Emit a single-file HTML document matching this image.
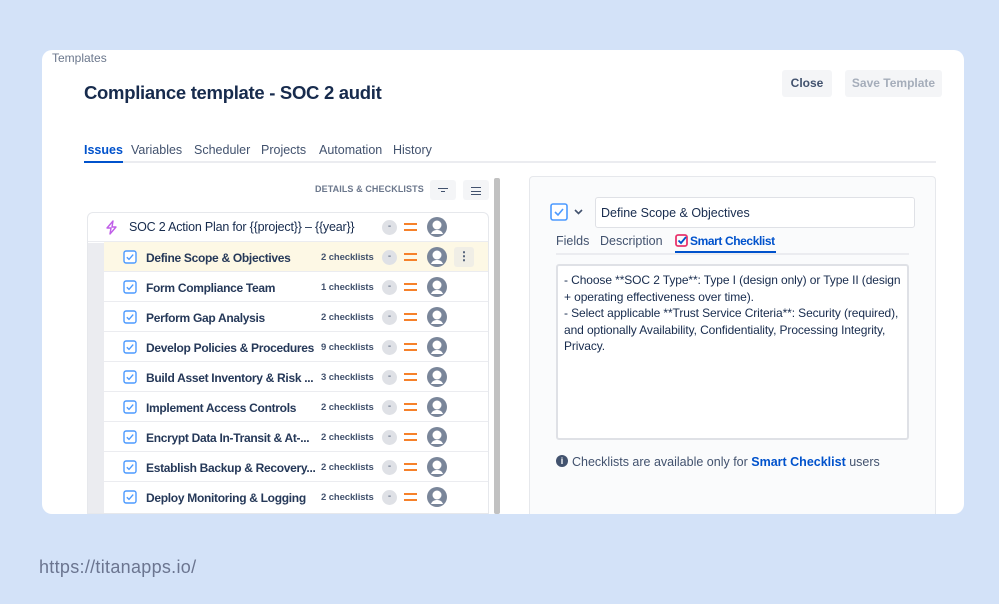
<!DOCTYPE html><html><head><style>
*{box-sizing:border-box;margin:0;padding:0}
body{width:999px;height:604px;background:#d3e2f8;font-family:"Liberation Sans",sans-serif;position:relative;overflow:hidden;color:#172b4d}
.a{position:absolute}
.card{left:42px;top:50px;width:922px;height:464px;background:#fff;border-radius:10px;overflow:hidden}
.row{position:absolute;left:104px;width:384px;height:30px;border-bottom:1px solid #ebecf0;font-size:12px;}
.row .t{position:absolute;left:42px;top:9px;font-weight:bold;color:#253858;letter-spacing:-0.3px;white-space:nowrap}
.row .cb{position:absolute;left:19px;top:8px}
.cnt{position:absolute;left:217px;top:10px;font-size:9.5px;font-weight:bold;color:#42526e;letter-spacing:-0.1px}
.dash{position:absolute;left:278px;top:8px;width:15px;height:15px;border-radius:50%;background:#dfe1e6;font-size:10px;text-align:center;line-height:14px;color:#42526e}
.eq{position:absolute;left:300px;top:11px;width:13px;height:8px;border-top:2px solid #f6812a;border-bottom:2px solid #f6812a}
.av{position:absolute;left:323px;top:5px}
</style></head><body>
<svg width="0" height="0" style="position:absolute"><defs>
<symbol id="cb" viewBox="0 0 14 14"><rect x="1" y="1" width="12" height="12" rx="2" fill="#fff" stroke="#4c9aff" stroke-width="1.4"/><path d="M3.8 7.2l2.2 2.2 4.2-4.8" fill="none" stroke="#4c9aff" stroke-width="1.4"/></symbol>
<symbol id="av" viewBox="0 0 20 20"><circle cx="10" cy="10" r="10" fill="#7a869a"/><circle cx="10" cy="8" r="4.5" fill="#fff"/><path d="M4 17c1-3 3.5-4 6-4s5 1 6 4z" fill="#fff"/></symbol>
</defs></svg>
<div class="a card">
<div class="a" style="left:10px;top:1px;font-size:12px;color:#6b778c">Templates</div>
<div class="a" style="left:42px;top:32px;font-size:18.5px;font-weight:bold;color:#172b4d;letter-spacing:-0.3px">Compliance template - SOC 2 audit</div>
<div class="a" style="left:740px;top:20px;width:50px;height:27px;background:#f4f5f7;border-radius:3px;font-size:12px;font-weight:bold;color:#42526e;text-align:center;line-height:27px">Close</div>
<div class="a" style="left:803px;top:20px;width:97px;height:27px;background:#f4f5f7;border-radius:3px;font-size:12px;font-weight:bold;color:#a5adba;text-align:center;line-height:27px">Save Template</div>
<div class="a" style="left:42px;top:92px;width:852px;font-size:12.5px;color:#42526e;border-bottom:2px solid #ebecf0;height:21px">
<span class="a" style="left:0;top:1px;color:#0052cc;font-weight:bold;border-bottom:2px solid #0052cc;padding-bottom:4px">Issues</span>
<span class="a" style="left:47px;top:1px">Variables</span>
<span class="a" style="left:110px;top:1px">Scheduler</span>
<span class="a" style="left:177px;top:1px">Projects</span>
<span class="a" style="left:235px;top:1px">Automation</span>
<span class="a" style="left:309px;top:1px">History</span>
</div>
</div>
<div class="a" style="left:315px;top:184px;font-size:9px;font-weight:bold;color:#6b778c;letter-spacing:0.1px">DETAILS &amp; CHECKLISTS</div>
<div class="a" style="left:430px;top:180px;width:26px;height:20px;background:#f4f5f7;border-radius:3px"><div class="a" style="left:8px;top:8px;width:10px;border-top:1.5px solid #42526e"></div><div class="a" style="left:11px;top:11px;width:4px;height:3px;border-top:1.5px solid #42526e"></div></div>
<div class="a" style="left:463px;top:180px;width:26px;height:20px;background:#f4f5f7;border-radius:3px"><div class="a" style="left:8px;top:7px;width:10px;height:8px;border-top:1.5px solid #42526e;border-bottom:1.5px solid #42526e"></div><div class="a" style="left:8px;top:11px;width:10px;border-top:1.5px solid #42526e"></div></div>
<div class="a" style="left:494px;top:178px;width:6px;height:336px;background:#c1c1c1;border-radius:2px"></div>
<div class="a" style="left:87px;top:212px;width:402px;height:302px;border:1px solid #e6e8ec;border-radius:6px 6px 0 0;overflow:hidden">
<div class="a" style="left:0;top:30px;width:16px;height:272px;background:#ebecf0"></div>
</div>
<div class="row" style="left:88px;top:212px;width:400px"><svg class="a" style="left:17px;top:8px" width="13" height="15" viewBox="0 0 13 15"><path d="M8 1L2 8h4l-1 6 6-7H7z" fill="none" stroke="#c05ee8" stroke-width="1.4" stroke-linejoin="round"/></svg><span class="t" style="font-weight:normal;color:#172b4d;left:41px;font-size:12.5px;letter-spacing:-0.2px;top:8px">SOC 2 Action Plan for {{project}} – {{year}}</span><div class="dash" style="left:294px">-</div><div class="eq" style="left:316px"></div><svg class="av" style="left:339px" width="20" height="20"><use href="#av"/></svg></div>
<div class="row" style="top:242px;background:#fdf8e5"><svg class="cb" width="14" height="14"><use href="#cb"/></svg><span class="t">Define Scope &amp; Objectives</span><span class="cnt">2 checklists</span><div class="dash">-</div><div class="eq"></div><svg class="av" width="20" height="20"><use href="#av"/></svg><div class="a" style="left:350px;top:5px;width:20px;height:20px;background:#f0eee6;border-radius:3px;text-align:center;font-weight:bold;line-height:19px;color:#42526e">⋮</div></div>
<div class="row" style="top:272px"><svg class="cb" width="14" height="14"><use href="#cb"/></svg><span class="t">Form Compliance Team</span><span class="cnt">1 checklists</span><div class="dash">-</div><div class="eq"></div><svg class="av" width="20" height="20"><use href="#av"/></svg></div>
<div class="row" style="top:302px"><svg class="cb" width="14" height="14"><use href="#cb"/></svg><span class="t">Perform Gap Analysis</span><span class="cnt">2 checklists</span><div class="dash">-</div><div class="eq"></div><svg class="av" width="20" height="20"><use href="#av"/></svg></div>
<div class="row" style="top:332px"><svg class="cb" width="14" height="14"><use href="#cb"/></svg><span class="t">Develop Policies &amp; Procedures</span><span class="cnt">9 checklists</span><div class="dash">-</div><div class="eq"></div><svg class="av" width="20" height="20"><use href="#av"/></svg></div>
<div class="row" style="top:362px"><svg class="cb" width="14" height="14"><use href="#cb"/></svg><span class="t">Build Asset Inventory &amp; Risk ...</span><span class="cnt">3 checklists</span><div class="dash">-</div><div class="eq"></div><svg class="av" width="20" height="20"><use href="#av"/></svg></div>
<div class="row" style="top:392px"><svg class="cb" width="14" height="14"><use href="#cb"/></svg><span class="t">Implement Access Controls</span><span class="cnt">2 checklists</span><div class="dash">-</div><div class="eq"></div><svg class="av" width="20" height="20"><use href="#av"/></svg></div>
<div class="row" style="top:422px"><svg class="cb" width="14" height="14"><use href="#cb"/></svg><span class="t">Encrypt Data In-Transit &amp; At-...</span><span class="cnt">2 checklists</span><div class="dash">-</div><div class="eq"></div><svg class="av" width="20" height="20"><use href="#av"/></svg></div>
<div class="row" style="top:452px"><svg class="cb" width="14" height="14"><use href="#cb"/></svg><span class="t">Establish Backup &amp; Recovery...</span><span class="cnt">2 checklists</span><div class="dash">-</div><div class="eq"></div><svg class="av" width="20" height="20"><use href="#av"/></svg></div>
<div class="row" style="top:482px;border-bottom:none"><svg class="cb" width="14" height="14"><use href="#cb"/></svg><span class="t">Deploy Monitoring &amp; Logging</span><span class="cnt">2 checklists</span><div class="dash">-</div><div class="eq"></div><svg class="av" width="20" height="20"><use href="#av"/></svg></div>

<div class="a" style="left:529px;top:176px;width:407px;height:338px;background:#fafbfc;border:1px solid #e6e8ec;border-bottom:none;border-radius:4px 4px 0 0"></div>
<svg class="a" style="left:550px;top:203px" width="18" height="18" viewBox="0 0 18 18"><rect x="1" y="1" width="16" height="16" rx="2" fill="#fff" stroke="#4c9aff" stroke-width="1.6"/><path d="M5 9l3 3 5-6" fill="none" stroke="#4c9aff" stroke-width="1.6"/></svg>
<svg class="a" style="left:574px;top:209px" width="9" height="6" viewBox="0 0 9 6"><path d="M1 1l3.5 3.5L8 1" fill="none" stroke="#42526e" stroke-width="1.6"/></svg>
<div class="a" style="left:595px;top:197px;width:320px;height:31px;background:#fff;border:1px solid #dfe1e6;border-radius:3px;font-size:12.5px;padding:8px 5px;color:#172b4d">Define Scope &amp; Objectives</div>
<div class="a" style="left:556px;top:253px;width:353px;border-top:2px solid #ebecf0"></div>
<div class="a" style="left:556px;top:234px;font-size:12.5px;color:#42526e">Fields</div>
<div class="a" style="left:600px;top:234px;font-size:12.5px;color:#42526e">Description</div>
<svg class="a" style="left:675px;top:234px" width="13" height="13" viewBox="0 0 13 13"><rect x="1" y="1" width="11" height="11" rx="2" fill="none" stroke="#e8356d" stroke-width="1.8"/><path d="M3.5 6.5l2.5 2.5 5-6" fill="none" stroke="#0052cc" stroke-width="1.8"/></svg>
<div class="a" style="left:690px;top:234px;font-size:12px;color:#0052cc;font-weight:bold;letter-spacing:-0.4px">Smart Checklist</div>
<div class="a" style="left:675px;top:251px;width:101px;border-top:2px solid #0052cc"></div>
<div class="a" style="left:556px;top:264px;width:353px;height:176px;background:#fff;border:2px solid #dfe1e6;border-radius:3px;padding:6px 6px;font-size:12px;line-height:16.5px;color:#172b4d;letter-spacing:-0.1px">- Choose **SOC 2 Type**: Type I (design only) or Type II (design + operating effectiveness over time).<br>- Select applicable **Trust Service Criteria**: Security (required), and optionally Availability, Confidentiality, Processing Integrity, Privacy.</div>
<div class="a" style="left:556px;top:455px;width:12px;height:12px;border-radius:50%;background:#42526e;color:#fff;font-size:9px;font-weight:bold;text-align:center;line-height:12px">i</div>
<div class="a" style="left:572px;top:455px;font-size:12.5px;color:#42526e">Checklists are available only for <b style="color:#0052cc">Smart Checklist</b> users</div>
<div class="a" style="left:39px;top:557px;font-size:18px;color:#6b7590;letter-spacing:0.3px">https://titanapps.io/</div>
</body></html>
